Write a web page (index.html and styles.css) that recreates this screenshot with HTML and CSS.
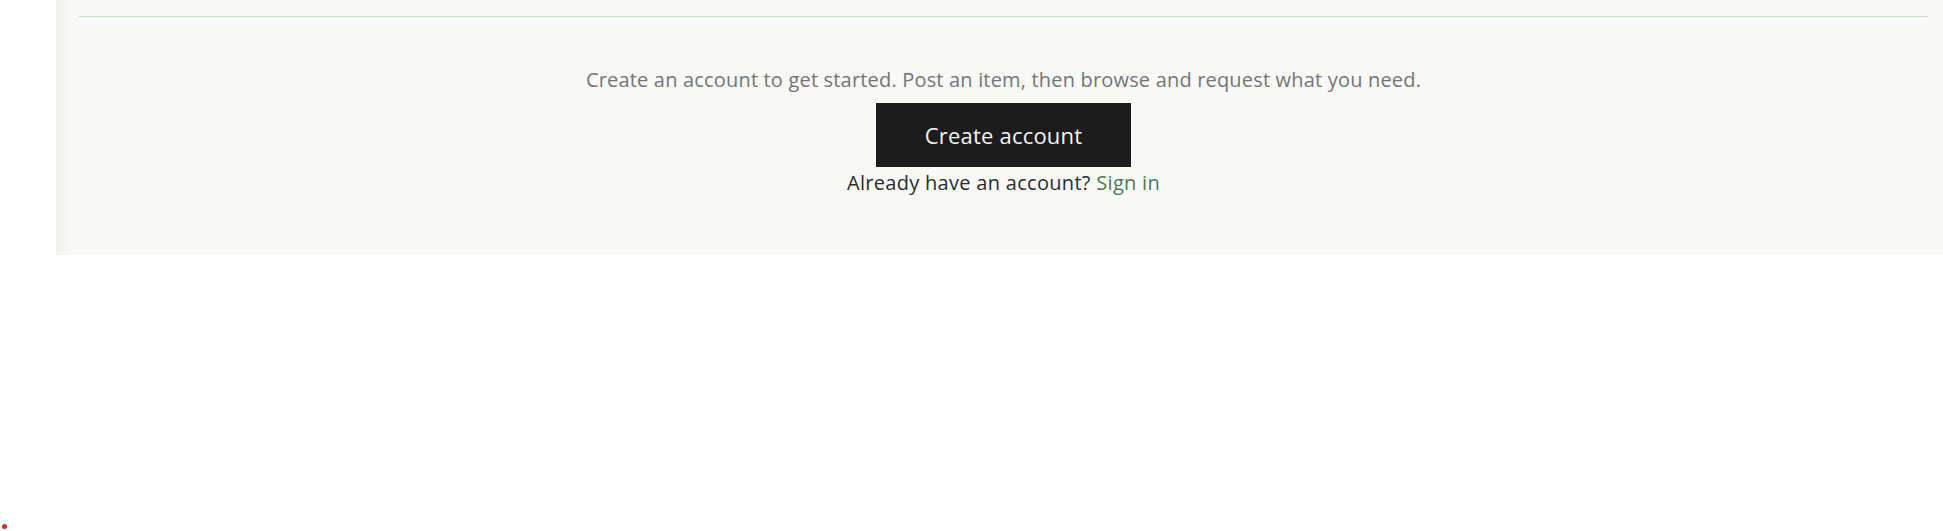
FILE: index.html
```html
<!DOCTYPE html>
<html lang="en">
<head>
<meta charset="utf-8">
<title>Get started</title>
<link rel="stylesheet" href="styles.css">
</head>
<body>
<main class="layout">
  <section class="panel">
    <hr class="divider">
    <div class="cta">
      <p class="lead">Create an account to get started. Post an item, then browse and request what you need.</p>
      <a class="btn-primary" href="#">Create account</a>
      <p class="signin">Already have an account? <a class="signin-link" href="#">Sign in</a></p>
    </div>
  </section>
</main>
<span class="dot"></span>
</body>
</html>
```
FILE: styles.css
```css
html, body {
  margin: 0;
  padding: 0;
  background: #ffffff;
  font-family: "Open Sans", "Noto Sans", "Liberation Sans", sans-serif;
}

.layout {
  display: flex;
  padding-left: 56px;
}

.panel {
  flex: 1;
  height: 255px;
  background: linear-gradient(to right, #efefee 0px, #f9f9f7 16px, #f9f9f7 100%);
  padding: 16px 15px 0 23px;
  box-sizing: border-box;
}

.divider {
  margin: 0;
  border: 0;
  height: 1px;
  background: #c9e0cb;
}

.cta {
  display: flex;
  flex-direction: column;
  align-items: center;
  padding-top: 49px;
}

.lead {
  margin: 0;
  font-size: 20px;
  line-height: 28px;
  color: #757575;
  letter-spacing: 0.18px;
}

.btn-primary {
  margin-top: 9px;
  width: 255px;
  height: 64px;
  display: flex;
  align-items: center;
  justify-content: center;
  background: #1c1c1c;
  color: #f4f4f4;
  font-size: 22px;
  text-decoration: none;
  letter-spacing: 0.2px;
}

.signin {
  margin: 0;
  font-size: 20px;
  line-height: 32px;
  color: #2c2c2c;
  letter-spacing: 0.3px;
}

.signin-link {
  color: #4b7a5c;
  text-decoration: none;
}

.dot {
  position: fixed;
  left: 2px;
  top: 524px;
  width: 5px;
  height: 5px;
  border-radius: 50%;
  background: #e8202a;
}
```
